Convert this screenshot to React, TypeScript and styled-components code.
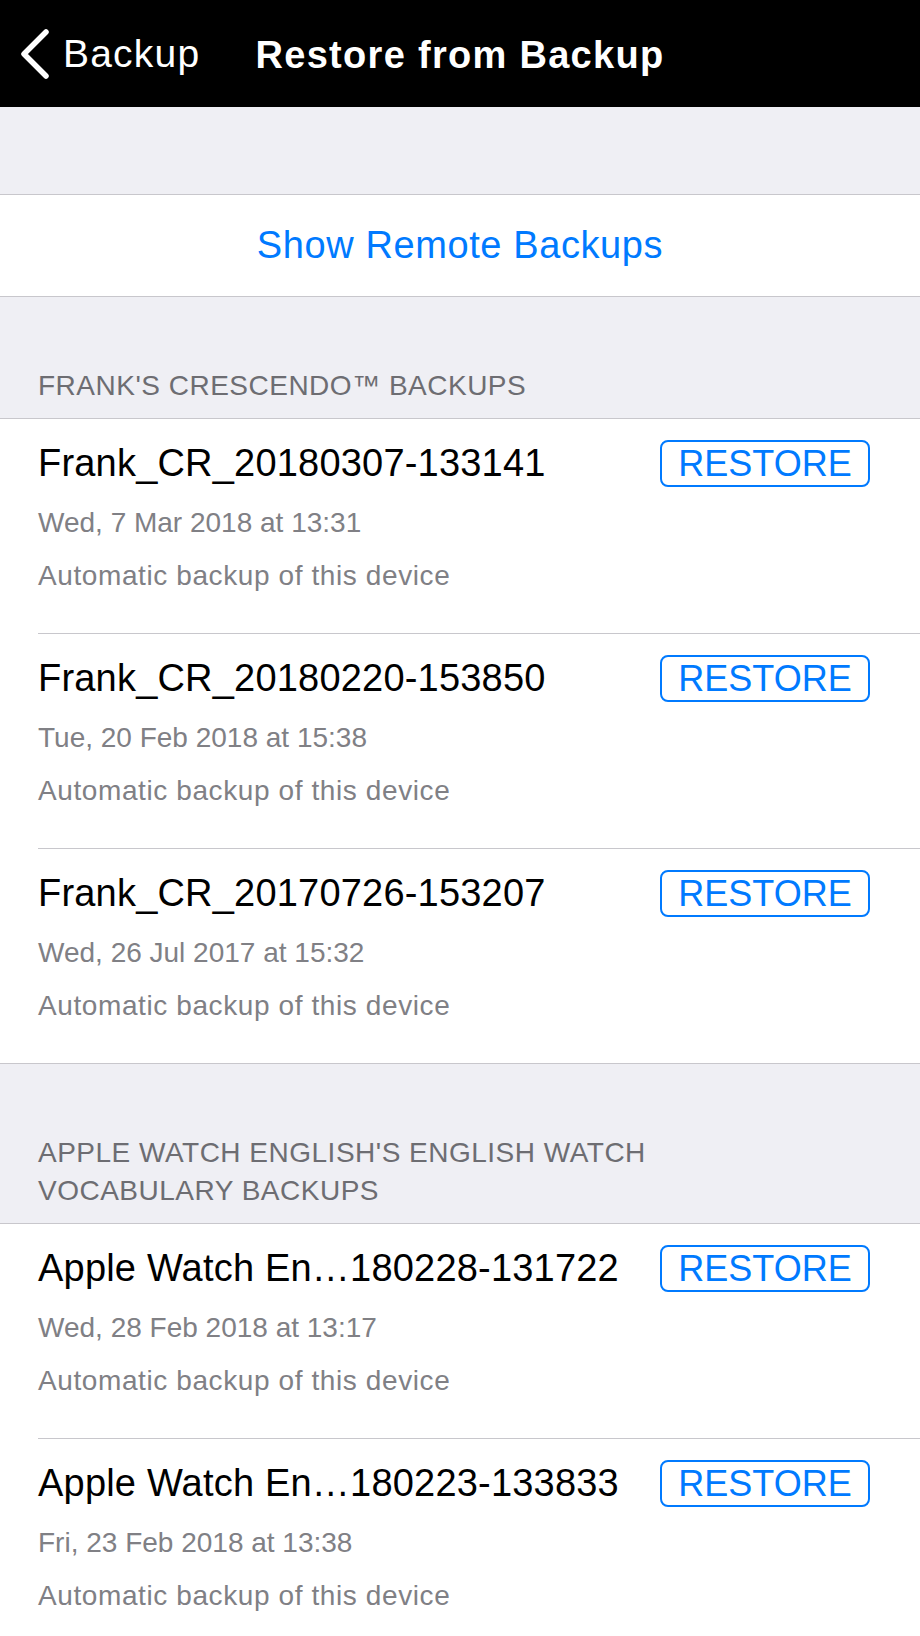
import styled, { createGlobalStyle } from 'styled-components';

const GlobalStyle = createGlobalStyle`
  html, body {
    margin: 0;
    padding: 0;
    background: #efeff4;
    font-family: "Liberation Sans", Arial, sans-serif;
  }
`;

type Backup = {
    name: string;
    date: string;
};

const groups: { title: string; items: Backup[] }[] = [
    {
        title: "Frank's Crescendo™ Backups",
        items: [
            { name: 'Frank_CR_20180307-133141', date: 'Wed, 7 Mar 2018 at 13:31' },
            { name: 'Frank_CR_20180220-153850', date: 'Tue, 20 Feb 2018 at 15:38' },
            { name: 'Frank_CR_20170726-153207', date: 'Wed, 26 Jul 2017 at 15:32' },
        ],
    },
    {
        title: "Apple Watch English's English Watch Vocabulary Backups",
        items: [
            { name: 'Apple Watch En…180228-131722', date: 'Wed, 28 Feb 2018 at 13:17' },
            { name: 'Apple Watch En…180223-133833', date: 'Fri, 23 Feb 2018 at 13:38' },
        ],
    },
];

function Chevron() {
    return (
        <svg width="32" height="52" viewBox="0 0 32 52">
            <polyline
                points="27,4 5,26 27,48"
                fill="none"
                stroke="#fff"
                strokeWidth="5.5"
                strokeLinecap="round"
                strokeLinejoin="round"
            />
        </svg>
    );
}

export default function App() {
    return (
        <>
            <GlobalStyle />
            <Page>
                <NavBar>
                    <BackButton>
                        <Chevron />
                        <BackLabel>Backup</BackLabel>
                    </BackButton>
                    <NavTitle>Restore from Backup</NavTitle>
                </NavBar>

                <Spacer />

                <Group>
                    <RemoteButton>Show Remote Backups</RemoteButton>
                </Group>

                {groups.map((group) => (
                    <section key={group.title}>
                        <SectionHeader>{group.title}</SectionHeader>
                        <Group>
                            {group.items.map((item, i) => (
                                <Row key={item.name} $last={i === group.items.length - 1}>
                                    <TopLine>
                                        <Name>{item.name}</Name>
                                        <RestoreButton>RESTORE</RestoreButton>
                                    </TopLine>
                                    <DateText>{item.date}</DateText>
                                    <Description>Automatic backup of this device</Description>
                                </Row>
                            ))}
                        </Group>
                    </section>
                ))}
            </Page>
        </>
    );
}

const Page = styled.div`
  width: 100%;
  min-height: 1636px;
  background: #efeff4;
`;

const NavBar = styled.header`
  position: relative;
  height: 107px;
  background: #000;
  display: flex;
  align-items: center;
  justify-content: center;
`;

const BackButton = styled.div`
  position: absolute;
  left: 19px;
  top: 28px;
  display: flex;
  align-items: center;
  gap: 12px;
  color: #fff;
`;

const BackLabel = styled.span`
  font-size: 39px;
  letter-spacing: 1.2px;
  line-height: 52px;
`;

const NavTitle = styled.h1`
  margin: 0;
  color: #fff;
  font-size: 38px;
  font-weight: 700;
  letter-spacing: 1.3px;
  line-height: 52px;
  margin-top: 2px;
`;

const Spacer = styled.div`
  height: 87px;
`;

const Group = styled.div`
  background: #fff;
  border-top: 1px solid #c8c7cc;
  border-bottom: 1px solid #c8c7cc;
`;

const RemoteButton = styled.div`
  height: 101px;
  display: flex;
  align-items: center;
  justify-content: center;
  color: #007aff;
  font-size: 38px;
  letter-spacing: 0.6px;
`;

const SectionHeader = styled.h2`
  margin: 0;
  padding: 70px 220px 13px 38px;
  font-size: 28px;
  font-weight: 400;
  line-height: 38px;
  letter-spacing: 0.5px;
  text-transform: uppercase;
  color: #6d6d72;
`;

const Row = styled.div<{ $last: boolean }>`
  position: relative;
  padding: 21px 50px 38px 38px;

  &::after {
    content: '';
    display: ${({ $last }) => ($last ? 'none' : 'block')};
    position: absolute;
    left: 38px;
    right: 0;
    bottom: -1px;
    height: 1px;
    background: #c8c7cc;
  }

  & + & {
    margin-top: 1px;
  }
`;

const TopLine = styled.div`
  height: 47px;
  display: flex;
  align-items: center;
  justify-content: space-between;
  gap: 20px;
`;

const Name = styled.span`
  font-size: 38px;
  letter-spacing: 0.2px;
  color: #000;
  white-space: nowrap;
`;

const RestoreButton = styled.button`
  flex: none;
  width: 210px;
  height: 47px;
  padding: 0;
  border: 2px solid #007aff;
  border-radius: 8px;
  background: #fff;
  color: #007aff;
  font-family: "Liberation Sans", Arial, sans-serif;
  font-size: 36px;
  line-height: 43px;
  cursor: pointer;
`;

const DateText = styled.div`
  margin-top: 17px;
  font-size: 28px;
  line-height: 38px;
  color: #808085;
`;

const Description = styled.div`
  margin-top: 15px;
  font-size: 28px;
  letter-spacing: 0.6px;
  line-height: 38px;
  color: #808085;
`;
